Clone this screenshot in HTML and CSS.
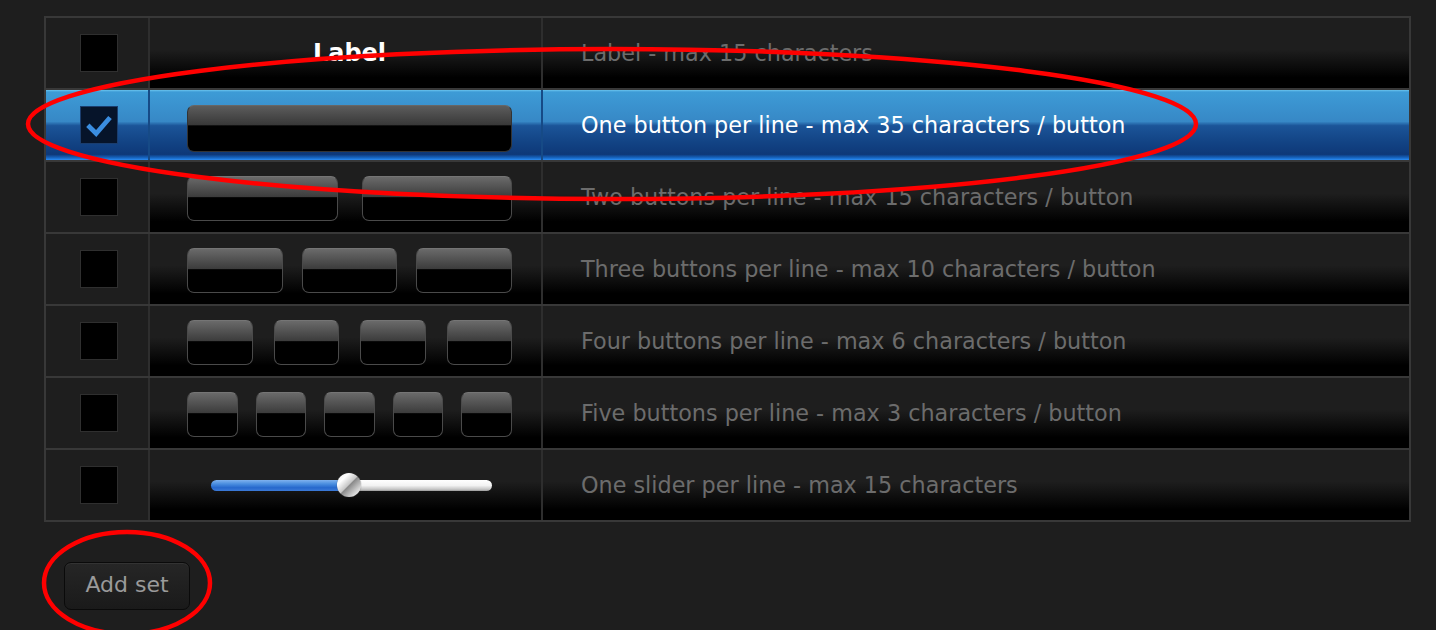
FILE: index.html
```html
<!DOCTYPE html>
<html>
<head>
<meta charset="utf-8">
<link rel="stylesheet" href="styles.css">
</head>
<body>
<div class="page">
  <div class="table">
    <div class="row">
      <div class="c-check"><span class="box"></span></div>
      <div class="c-preview"><span class="label-preview">Label</span></div>
      <div class="c-text">Label - max 15 characters</div>
    </div>
    <div class="row selected">
      <div class="c-check"><span class="box checked"><svg viewBox="0 0 38 38" width="36" height="36"><path d="M9 21 L16 28 L29 13" fill="none" stroke="#3a8de0" stroke-width="5" stroke-linecap="square" stroke-linejoin="miter"/></svg></span></div>
      <div class="c-preview"><div class="btns single"><span class="btn tall"></span></div></div>
      <div class="c-text">One button per line - max 35 characters / button</div>
    </div>
    <div class="row">
      <div class="c-check"><span class="box"></span></div>
      <div class="c-preview"><div class="btns g2"><span class="btn"></span><span class="btn"></span></div></div>
      <div class="c-text">Two buttons per line - max 15 characters / button</div>
    </div>
    <div class="row">
      <div class="c-check"><span class="box"></span></div>
      <div class="c-preview"><div class="btns g3"><span class="btn"></span><span class="btn"></span><span class="btn"></span></div></div>
      <div class="c-text">Three buttons per line - max 10 characters / button</div>
    </div>
    <div class="row">
      <div class="c-check"><span class="box"></span></div>
      <div class="c-preview"><div class="btns g4"><span class="btn"></span><span class="btn"></span><span class="btn"></span><span class="btn"></span></div></div>
      <div class="c-text">Four buttons per line - max 6 characters / button</div>
    </div>
    <div class="row">
      <div class="c-check"><span class="box"></span></div>
      <div class="c-preview"><div class="btns g5"><span class="btn"></span><span class="btn"></span><span class="btn"></span><span class="btn"></span><span class="btn"></span></div></div>
      <div class="c-text">Five buttons per line - max 3 characters / button</div>
    </div>
    <div class="row">
      <div class="c-check"><span class="box"></span></div>
      <div class="c-preview">
        <div class="slider">
          <span class="track-fill"></span><span class="track-rest"></span>
          <span class="thumb"></span>
        </div>
      </div>
      <div class="c-text">One slider per line - max 15 characters</div>
    </div>
  </div>
  <div class="actions">
    <button class="add-set">Add set</button>
  </div>
</div>
<svg class="annot" width="1436" height="630" viewBox="0 0 1436 630">
  <ellipse cx="612" cy="124" rx="584" ry="75" fill="none" stroke="#ff0000" stroke-width="4.5"/>
  <ellipse cx="127" cy="583" rx="83" ry="51" fill="none" stroke="#ff0000" stroke-width="4.5"/>
</svg>
</body>
</html>
```
FILE: styles.css
```css
html, body {
  margin: 0;
  padding: 0;
  background: #1e1e1e;
  font-family: "DejaVu Sans", Verdana, sans-serif;
  overflow: hidden;
}
.page {
  padding: 16px 0 0 44px;
}
.table {
  width: 1363px;
  border: 2px solid #383838;
  border-top: none;
}
.row {
  display: grid;
  grid-template-columns: 104px 393px 1fr;
  height: 70px;
  border-top: 2px solid #383838;
}
.c-check {
  display: flex;
  align-items: center;
  justify-content: center;
  background: #1e1e1e;
  border-right: 2px solid #2e2e2e;
}
.c-preview {
  display: flex;
  align-items: center;
  justify-content: center;
  padding: 0 29px 0 37px;
  background: linear-gradient(#1e1e1e 45%, #000 85%);
  border-right: 2px solid #2e2e2e;
}
.c-text {
  display: flex;
  align-items: center;
  padding-left: 38px;
  background: linear-gradient(#1e1e1e 45%, #000 85%);
  color: #6c6c6c;
  font-size: 22.3px;
}
.box {
  width: 36px;
  height: 36px;
  background: #000;
  border: 1px solid #2f2f2f;
  display: block;
  margin-left: 3px;
}
.box svg { display: block; }
.label-preview {
  color: #fff;
  font-weight: bold;
  font-size: 24px;
}
.btns {
  display: flex;
  width: 100%;
  gap: 24px;
  margin-top: 3px;
}
.btns.single { margin-top: 6px; }
.btns.g3 { gap: 19px; }
.btns.g4 { gap: 21px; }
.btns.g5 { gap: 18px; }
.btn {
  flex: 1;
  height: 43px;
  border: 1px solid #4a4a4a;
  border-top-color: #757575;
  border-radius: 7px;
  background: linear-gradient(#6a6a6a 0%, #3c3c3c 46%, #000 48%, #000 100%);
}
.btn.tall {
  height: 45px;
  border-color: #333;
  border-top-color: #666;
  background: linear-gradient(#5c5c5c 0%, #383838 42%, #000 44%, #000 100%);
}
.selected .c-check,
.selected .c-preview,
.selected .c-text {
  background: linear-gradient(#6ac4ee 0px, #3d9bd6 2px, #3788c6 45%, #1b5498 51%, #124384 75%, #0e3878 92%, #1767c4 97%, #2c8cf2 100%);
  border-right-color: #164a86;
}
.selected .c-text { color: #fff; }
.box.checked {
  background: #06142a;
  border-color: #1a3d6e;
}
.slider {
  position: relative;
  width: 281px;
  height: 11px;
  margin-left: 23px;
  margin-right: 20px;
  display: flex;
}
.track-fill {
  width: 138px;
  height: 11px;
  border-radius: 6px 0 0 6px;
  background: linear-gradient(#7fb2ee 0%, #4b8fe0 35%, #2668cc 70%, #3c7ad8 100%);
}
.track-rest {
  flex: 1;
  height: 11px;
  border-radius: 0 6px 6px 0;
  background: linear-gradient(#ffffff 0%, #f2f2f2 50%, #c4c4c4 85%, #9a9a9a 100%);
}
.thumb {
  position: absolute;
  left: 126px;
  top: -7px;
  width: 24px;
  height: 24px;
  border-radius: 50%;
  background: linear-gradient(135deg, #e8e8e8 0%, #ffffff 25%, #c8c8c8 48%, #8a8a8a 52%, #d8d8d8 80%, #f4f4f4 100%);
  box-shadow: 0 0 1px #555;
}
.actions {
  padding: 40px 0 0 20px;
}
.add-set {
  width: 126px;
  height: 48px;
  border-radius: 7px;
  border: 1px solid #0a0a0a;
  background: linear-gradient(#262626, #1a1a1a);
  box-shadow: inset 0 1px 0 #333;
  color: #9a9a9a;
  font-family: "DejaVu Sans", Verdana, sans-serif;
  font-size: 22px;
  padding: 0 0 3px 0;
}
.annot {
  position: absolute;
  left: 0;
  top: 0;
  pointer-events: none;
}
```
